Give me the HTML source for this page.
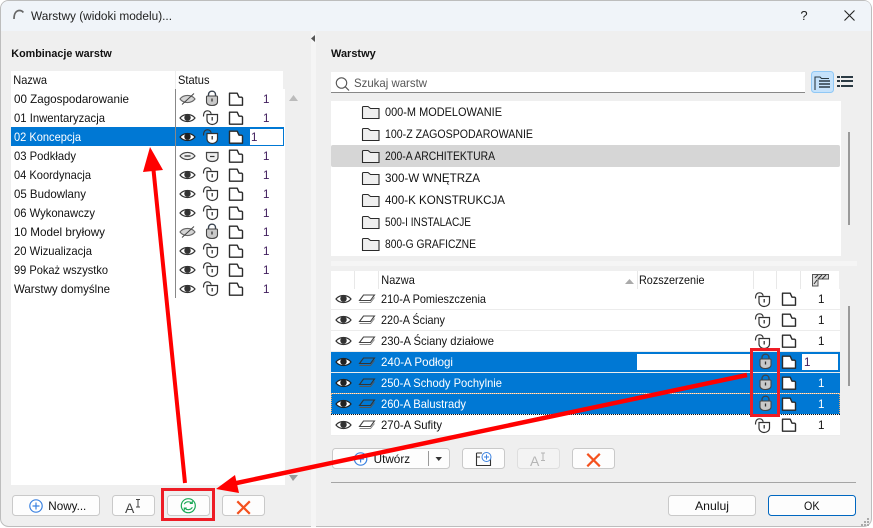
<!DOCTYPE html>
<html><head><meta charset="utf-8"><style>
html,body{margin:0;padding:0;background:#fff;width:873px;height:528px;overflow:hidden}
svg{display:block;font-family:"Liberation Sans",sans-serif}
text{font-size:11.6px;fill:#111}
.w{fill:#fff}
.b{font-weight:bold;font-size:11.4px;fill:#111}
.n{fill:#3d1a5a;font-size:11.6px}
.btn{fill:#fdfdfd;stroke:#c9c9c9}
</style></head><body>
<svg width="873" height="528" viewBox="0 0 873 528" xmlns="http://www.w3.org/2000/svg">
<defs>
<symbol id="eye" width="18" height="12" overflow="visible"><path d="M1 6C4.500 1.300 12.500 1.300 16 6C12.500 10.700 4.500 10.700 1 6Z" fill="#fff" stroke="#333" stroke-width="1.200"/><circle cx="8.500" cy="5.700" r="3.200" fill="#333"/></symbol>
<symbol id="eyew" width="18" height="12" overflow="visible"><path d="M1 6C4.500 1.300 12.500 1.300 16 6C12.500 10.700 4.500 10.700 1 6Z" fill="#fff" stroke="#222" stroke-width="1.200"/><circle cx="8.500" cy="5.700" r="3.200" fill="#222"/></symbol>
<symbol id="eyeh" width="18" height="12" overflow="visible"><path d="M1 6C4.500 1.300 12.500 1.300 16 6C12.500 10.700 4.500 10.700 1 6Z" fill="#d5d5d5" stroke="#666" stroke-width="1.100"/><path d="M3 11.500L15 .5" stroke="#444" fill="none"/></symbol>
<symbol id="eyed" width="18" height="12" overflow="visible"><path d="M1 6C4.500 1.300 12.500 1.300 16 6C12.500 10.700 4.500 10.700 1 6Z" fill="#eee" stroke="#444" stroke-width="1.100"/><path d="M5.500 6H11.500" stroke="#333" fill="none" stroke-width="1.300"/></symbol>
<symbol id="open" width="18" height="18" overflow="visible"><path d="M1.500 7.500C1.500 3.500 3 1.800 5.500 1.800C7.500 1.800 8.700 2.800 9.200 4.800" fill="none" stroke="#333" stroke-width="1.150"/><path d="M5 5.500H15.500V11C15.500 13.500 13 15.500 10.200 15.500C7.500 15.500 5 13.500 5 11Z" fill="#fff" stroke="#333" stroke-width="1.200"/><path d="M10.200 8V11.500" stroke="#333" stroke-width="1.300"/></symbol>
<symbol id="lock" width="14" height="17" overflow="visible"><path d="M3.500 7V4.500C3.500 2.500 5 1.200 7 1.200C9 1.200 10.500 2.500 10.500 4.500V7" fill="none" stroke="#3a4450" stroke-width="1.400"/><path d="M1.500 7C1.500 6.300 2 6 2.500 6H11.500C12 6 12.500 6.300 12.500 7V12C12.500 14 10.500 15.500 7 15.500C3.500 15.500 1.500 14 1.500 12Z" fill="#c9c9c9" stroke="#444" stroke-width="1.100"/><path d="M7 8.500V11.500" stroke="#333" stroke-width="1.300"/></symbol>
<symbol id="shield" width="14" height="12" overflow="visible"><path d="M1.500 1.500H13V6.500C13 9 10.300 10.500 7.250 10.500C4.200 10.500 1.500 9 1.500 6.500Z" fill="#eee" stroke="#444" stroke-width="1.200"/><path d="M5 5.500H9.500" stroke="#333" stroke-width="1.200"/></symbol>
<symbol id="page" width="16" height="16" overflow="visible"><path d="M1.500 1.200H9.200L11 5.200H13.800L14.500 6V13.200H1.500Z" fill="#fff" stroke="#2b2b2b" stroke-width="1.400" stroke-linejoin="round"/></symbol>
<symbol id="folder" width="19" height="15" overflow="visible"><path d="M1 13.500V2.500C1 2 1.300 1.500 2 1.500H6.500L9 3.500H17.500V13.500Z" fill="#efefef" stroke="#2b2b2b" stroke-width="1.100"/></symbol>
<symbol id="layer" width="18" height="10" overflow="visible"><path d="M5.500 1H16.500L12.500 6.500H1.500Z" fill="none" stroke="#444" stroke-width="1.100"/><path d="M1.500 8.500H12.500L16.500 3.500" fill="none" stroke="#888" stroke-width="1"/></symbol>
<symbol id="layers" width="18" height="10" overflow="visible"><path d="M5.500 1H16.500L12.500 6.500H1.500Z" fill="none" stroke="#333" stroke-width="1.100"/><path d="M1.500 8.500H12.500L16.500 3.500" fill="none" stroke="#555" stroke-width="1"/></symbol>
<symbol id="x" width="16" height="16" overflow="visible"><path d="M1 1L13.500 13.500M13.500 1L1 13.500" stroke="#f4511e" stroke-width="2.200" fill="none"/></symbol>
<symbol id="plus" width="15" height="15" overflow="visible"><circle cx="7" cy="7" r="6.200" fill="#fff" stroke="#3b82e0" stroke-width="1.200"/><path d="M7 3.500V10.500M3.500 7H10.500" stroke="#3b82e0" stroke-width="1.200"/></symbol>
</defs>

<!-- window -->
<rect width="873" height="528" fill="#fff"/>
<rect x="0.500" y="0.500" width="871" height="526" rx="8" fill="#efefef" stroke="#bdbdbd"/>
<path d="M1 31V9C1 4 4 1 9 1H864C869 1 871 4 871 9V31Z" fill="#f0f4f9"/>
<path d="M14 19C14 13 16.500 10.500 19.500 10.500C21.200 10.500 22.500 11.200 23.300 12.500" fill="none" stroke="#666" stroke-width="1.700"/>
<text x="31" y="20" textLength="141" lengthAdjust="spacingAndGlyphs" style="font-size:12.300px;fill:#222">Warstwy (widoki modelu)...</text>
<text x="800.4" y="20" style="font-size:13px;fill:#222">?</text>
<path d="M844.500 10.500L854.500 20.500M854.500 10.500L844.500 20.500" stroke="#222" stroke-width="1.100" fill="none"/>
<rect x="311" y="31" width="5" height="496" fill="#f5f5f5"/>
<path d="M311 38.500L315 35V42Z" fill="#555"/>

<!-- left -->
<text x="11.300" y="57" class="b" textLength="100.500" lengthAdjust="spacingAndGlyphs">Kombinacje warstw</text>
<rect x="11" y="71" width="274" height="414" fill="#fff"/>
<rect x="283" y="71" width="2" height="18" fill="#efefef"/>
<text x="13.300" y="84" textLength="33.700" lengthAdjust="spacingAndGlyphs">Nazwa</text><text x="178" y="84" textLength="31.500" lengthAdjust="spacingAndGlyphs">Status</text>
<rect x="11" y="127" width="273" height="19" fill="#0078d4"/>
<rect x="175" y="89" width="1" height="209" fill="#888"/>
<rect x="175" y="71" width="1" height="18" fill="#eee"/>
<rect x="249.500" y="128.500" width="34" height="17" fill="#fff" stroke="#0078d4"/>

<text x="14" y="103" textLength="115" lengthAdjust="spacingAndGlyphs">00 Zagospodarowanie</text>
<text x="14" y="122" textLength="91" lengthAdjust="spacingAndGlyphs">01 Inwentaryzacja</text>
<text x="14" y="141" class="w" textLength="67" lengthAdjust="spacingAndGlyphs">02 Koncepcja</text>
<text x="14" y="160" textLength="62" lengthAdjust="spacingAndGlyphs">03 Podkłady</text>
<text x="14" y="179" textLength="77" lengthAdjust="spacingAndGlyphs">04 Koordynacja</text>
<text x="14" y="198" textLength="72" lengthAdjust="spacingAndGlyphs">05 Budowlany</text>
<text x="14" y="217" textLength="81" lengthAdjust="spacingAndGlyphs">06 Wykonawczy</text>
<text x="14" y="236" textLength="91" lengthAdjust="spacingAndGlyphs">10 Model bryłowy</text>
<text x="14" y="255" textLength="78" lengthAdjust="spacingAndGlyphs">20 Wizualizacja</text>
<text x="14" y="274" textLength="94" lengthAdjust="spacingAndGlyphs">99 Pokaż wszystko</text>
<text x="14" y="293" textLength="96" lengthAdjust="spacingAndGlyphs">Warstwy domyślne</text>

<use href="#eyeh" x="179" y="93"/><use href="#lock" x="205" y="90"/><use href="#page" x="228" y="92"/><text x="263" y="103" class="n">1</text>
<use href="#eye" x="179" y="112"/><use href="#open" x="202" y="109"/><use href="#page" x="228" y="111"/><text x="263" y="122" class="n">1</text>
<use href="#eyew" x="179" y="131"/><use href="#open" x="202" y="128"/><use href="#page" x="228" y="130"/><text x="251" y="141" class="n">1</text>
<use href="#eyed" x="179" y="150"/><use href="#shield" x="205" y="151"/><use href="#page" x="228" y="149"/><text x="263" y="160" class="n">1</text>
<use href="#eye" x="179" y="169"/><use href="#open" x="202" y="166"/><use href="#page" x="228" y="168"/><text x="263" y="179" class="n">1</text>
<use href="#eye" x="179" y="188"/><use href="#open" x="202" y="185"/><use href="#page" x="228" y="187"/><text x="263" y="198" class="n">1</text>
<use href="#eye" x="179" y="207"/><use href="#open" x="202" y="204"/><use href="#page" x="228" y="206"/><text x="263" y="217" class="n">1</text>
<use href="#eyeh" x="179" y="226"/><use href="#lock" x="205" y="223"/><use href="#page" x="228" y="225"/><text x="263" y="236" class="n">1</text>
<use href="#eye" x="179" y="245"/><use href="#open" x="202" y="242"/><use href="#page" x="228" y="244"/><text x="263" y="255" class="n">1</text>
<use href="#eye" x="179" y="264"/><use href="#open" x="202" y="261"/><use href="#page" x="228" y="263"/><text x="263" y="274" class="n">1</text>
<use href="#eye" x="179" y="283"/><use href="#open" x="202" y="280"/><use href="#page" x="228" y="282"/><text x="263" y="293" class="n">1</text>

<path d="M293.500 95L289 101H298Z" fill="#bbb"/>
<path d="M293 481L289 475H298Z" fill="#999"/>

<!-- left buttons -->
<rect x="12.500" y="495.500" width="87" height="20" rx="3" class="btn"/>
<use href="#plus" x="29" y="499"/><text x="48.300" y="510" textLength="38" lengthAdjust="spacingAndGlyphs">Nowy...</text>
<rect x="112.500" y="495.500" width="42" height="20" rx="3" class="btn"/>
<text x="125" y="513" style="font-size:14px;fill:#444">A</text><path d="M136 499.500H140M138 499.500V507M136 507H140" stroke="#444" fill="none"/>
<rect x="167.500" y="495.500" width="42" height="20" rx="3" class="btn"/>
<circle cx="188.300" cy="505.700" r="7" fill="none" stroke="#19a855" stroke-width="1.200"/>
<path d="M184.300 504.200C185.300 501.700 189.300 500.700 191.800 503.200M189.800 503.400H192.300V500.900M192.300 507.200C191.300 509.700 187.300 510.700 184.800 508.200M186.800 508H184.300V510.500" fill="none" stroke="#19a855" stroke-width="1.100"/>
<rect x="222.500" y="495.500" width="42" height="20" rx="3" class="btn"/>
<use href="#x" x="236.300" y="500.300"/>

<!-- right -->
<text x="331" y="57" class="b" textLength="44.700" lengthAdjust="spacingAndGlyphs">Warstwy</text>
<rect x="331" y="72" width="474" height="21" fill="#fff"/>
<rect x="331" y="92" width="474" height="1" fill="#888"/>
<circle cx="341.500" cy="83" r="5.200" fill="none" stroke="#555" stroke-width="1.100"/>
<path d="M345.200 86.700L349 90.500" stroke="#555" stroke-width="1.200"/>
<text x="354" y="87" textLength="73" lengthAdjust="spacingAndGlyphs" style="fill:#555">Szukaj warstw</text>
<rect x="811.500" y="71.500" width="22" height="21" rx="3" fill="#c5e2fb" stroke="#90c8f5"/>
<path d="M815 90V77H820L821.500 78.500H829" fill="none" stroke="#2b3a44" stroke-width="1.100"/>
<path d="M819 81H830M819 84H830M819 87H830" stroke="#2b3a44" stroke-width="1.600"/>
<rect x="837" y="76" width="3" height="2" fill="#2b3a44"/><rect x="837" y="80" width="3" height="2" fill="#2b3a44"/><rect x="837" y="85" width="3" height="2" fill="#2b3a44"/>
<path d="M841 77H853M841 81H853M841 86H853" stroke="#2b3a44" stroke-width="2"/>

<rect x="331" y="101" width="510" height="155" fill="#fff"/>
<rect x="331" y="145" width="509" height="22" rx="2" fill="#d6d6d6"/>
<rect x="848" y="132" width="2" height="93" fill="#9a9a9a"/>
<use href="#folder" x="361.500" y="105"/><text x="385" y="116" textLength="117" lengthAdjust="spacingAndGlyphs">000-M MODELOWANIE</text>
<use href="#folder" x="361.500" y="127"/><text x="385" y="138" textLength="148" lengthAdjust="spacingAndGlyphs">100-Z ZAGOSPODAROWANIE</text>
<use href="#folder" x="361.500" y="149"/><text x="385" y="160" textLength="110" lengthAdjust="spacingAndGlyphs">200-A ARCHITEKTURA</text>
<use href="#folder" x="361.500" y="171"/><text x="385" y="182" textLength="95" lengthAdjust="spacingAndGlyphs">300-W WNĘTRZA</text>
<use href="#folder" x="361.500" y="193"/><text x="385" y="204" textLength="120" lengthAdjust="spacingAndGlyphs">400-K KONSTRUKCJA</text>
<use href="#folder" x="361.500" y="215"/><text x="385" y="226" textLength="86" lengthAdjust="spacingAndGlyphs">500-I INSTALACJE</text>
<use href="#folder" x="361.500" y="237"/><text x="385" y="248" textLength="91" lengthAdjust="spacingAndGlyphs">800-G GRAFICZNE</text>

<rect x="331" y="261" width="526" height="5" fill="#f5f5f5"/>

<!-- layers table -->
<rect x="331" y="271" width="509" height="165" fill="#fff"/>
<rect x="839" y="271" width="1" height="18" fill="#efefef"/>
<path d="M354.500 271V289M378.500 271V289M637.500 271V289M753.500 271V289M776.500 271V289M800.500 271V289" stroke="#e8e8e8" fill="none"/>
<text x="381.300" y="284" textLength="33.500" lengthAdjust="spacingAndGlyphs">Nazwa</text><text x="639" y="284" textLength="65.500" lengthAdjust="spacingAndGlyphs">Rozszerzenie</text>
<path d="M629.500 279L625 284H634Z" fill="#aaa"/>
<path d="M812.500 274.500H828.500V279H818V286H812.500Z" fill="#ddd" stroke="#555"/>
<path d="M815 278L818 275M818 279L822 275M822 279L826 275M814 284L817 280" stroke="#333" fill="none"/>
<path d="M331 309.500H840M331 330.500H840M331 351.500H840M331 372.500H840M331 393.500H840M331 414.500H840M331 435.500H840" stroke="#ececec" fill="none"/>
<rect x="331" y="352" width="509" height="20" fill="#0078d4"/>
<rect x="331" y="373" width="509" height="20" fill="#0078d4"/>
<rect x="331" y="394" width="509" height="20" fill="#0078d4"/>
<path d="M331 414.500H840" stroke="#111" stroke-dasharray="1 1"/>
<path d="M331 393.500H840M331.500 394V414M839.500 394V414" stroke="#e8a66a" stroke-dasharray="1 1" fill="none"/>
<rect x="637" y="354" width="113" height="16" fill="#fff"/>
<rect x="802" y="354" width="36" height="16" fill="#fff"/>
<rect x="848" y="306" width="2" height="80" fill="#9a9a9a"/>

<use href="#eye" x="335" y="293"/><use href="#layer" x="358" y="294"/><text x="381" y="303" textLength="105" lengthAdjust="spacingAndGlyphs">210-A Pomieszczenia</text>
<use href="#eye" x="335" y="314"/><use href="#layer" x="358" y="315"/><text x="381" y="324" textLength="64" lengthAdjust="spacingAndGlyphs">220-A Ściany</text>
<use href="#eye" x="335" y="335"/><use href="#layer" x="358" y="336"/><text x="381" y="345" textLength="113" lengthAdjust="spacingAndGlyphs">230-A Ściany działowe</text>
<use href="#eyew" x="335" y="356"/><use href="#layers" x="358" y="357"/><text x="381" y="366" class="w" textLength="72" lengthAdjust="spacingAndGlyphs">240-A Podłogi</text>
<use href="#eyew" x="335" y="377"/><use href="#layers" x="358" y="378"/><text x="381" y="387" class="w" textLength="121" lengthAdjust="spacingAndGlyphs">250-A Schody Pochylnie</text>
<use href="#eyew" x="335" y="398"/><use href="#layers" x="358" y="399"/><text x="381" y="408" class="w" textLength="85" lengthAdjust="spacingAndGlyphs">260-A Balustrady</text>
<use href="#eye" x="335" y="419"/><use href="#layer" x="358" y="420"/><text x="381" y="429" textLength="61" lengthAdjust="spacingAndGlyphs">270-A Sufity</text>

<use href="#open" x="754" y="291"/><use href="#page" x="781" y="292"/><text x="818" y="303">1</text>
<use href="#open" x="754" y="312"/><use href="#page" x="781" y="313"/><text x="818" y="324">1</text>
<use href="#open" x="754" y="333"/><use href="#page" x="781" y="334"/><text x="818" y="345">1</text>
<use href="#lock" x="758.500" y="353"/><use href="#page" x="781" y="355"/><text x="804" y="366" class="n">1</text>
<use href="#lock" x="758.500" y="374"/><use href="#page" x="781" y="376"/><text x="818" y="387" class="w">1</text>
<use href="#lock" x="758.500" y="395"/><use href="#page" x="781" y="397"/><text x="818" y="408" class="w">1</text>
<use href="#open" x="754" y="417"/><use href="#page" x="781" y="418"/><text x="818" y="429">1</text>

<!-- right buttons -->
<rect x="332.500" y="448.500" width="117" height="20" rx="3" class="btn"/>
<use href="#plus" x="353.600" y="452"/><text x="373.600" y="463" textLength="36.500" lengthAdjust="spacingAndGlyphs">Utwórz</text>
<path d="M428.500 451V466" stroke="#999"/>
<path d="M435.500 457H442L438.750 461Z" fill="#333"/>
<rect x="462.500" y="448.500" width="42" height="20" rx="3" class="btn"/>
<path d="M476.500 453V465.500H490.500V459M476.500 453H482" fill="none" stroke="#333" stroke-width="1.100"/><path d="M476.500 457H480" stroke="#333" fill="none"/>
<circle cx="486.500" cy="457" r="4.500" fill="#fff" stroke="#3b82e0"/><path d="M486.500 454.500V459.500M484 457H489" stroke="#3b82e0"/>
<rect x="517.500" y="448.500" width="42" height="20" rx="3" fill="#f3f3f3" stroke="#dedede"/>
<text x="530" y="466" style="font-size:14px;fill:#b5b5b5">A</text><path d="M541 453H545M543 453V460.500M541 460.500H545" stroke="#b5b5b5" fill="none"/>
<rect x="572.500" y="448.500" width="42" height="20" rx="3" class="btn"/>
<use href="#x" x="586.300" y="452.800"/>

<rect x="331" y="482" width="525" height="1" fill="#a5a5a5"/>
<rect x="668.500" y="495.500" width="87" height="20" rx="3" class="btn"/>
<text x="695" y="510" textLength="34" lengthAdjust="spacingAndGlyphs">Anuluj</text>
<rect x="768.500" y="495.500" width="87" height="20" rx="3" fill="#fdfdfd" stroke="#0067c0"/>
<text x="804" y="510" textLength="15.500" lengthAdjust="spacingAndGlyphs">OK</text>
<path d="M867 518h2v2h-2zM864 521h2v2h-2zM867 521h2v2h-2zM861 524h2v2h-2zM864 524h2v2h-2zM867 524h2v2h-2z" fill="#aaa"/>

<!-- annotations -->
<path d="M185 483L153 165" stroke="#ff0000" stroke-width="4" fill="none"/>
<path d="M150 147L143 172L163 170Z" fill="#ff0000"/>
<path d="M747 375L232 484" stroke="#ff0000" stroke-width="4.500" fill="none"/>
<path d="M216 489L235 475L239 493Z" fill="#ff0000"/>
<rect x="162.500" y="489.500" width="51" height="30" fill="none" stroke="#ee1c25" stroke-width="3"/>
<rect x="751.500" y="349.500" width="27" height="66" fill="none" stroke="#ee1c25" stroke-width="3"/>
</svg>
</body></html>
